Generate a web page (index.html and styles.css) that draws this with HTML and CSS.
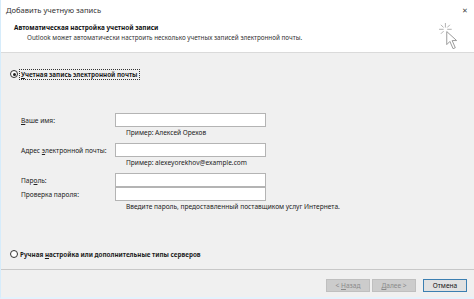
FILE: index.html
```html
<!DOCTYPE html>
<html lang="ru">
<head>
  <meta charset="UTF-8" />
  <title>Добавить учетную запись</title>
  <link rel="stylesheet" href="styles.css">
</head>
<body>
  <div class="window">
    <div class="titlebar">
      <span class="title">Добавить учетную запись</span>
      <span class="close">&#x2715;</span>
    </div>

    <div class="header">
      <div class="header-text">
        <div class="header-title">Автоматическая настройка учетной записи</div>
        <div class="header-sub">Outlook может автоматически настроить несколько учетных записей электронной почты.</div>
      </div>
      <svg class="wizard-icon" width="20" height="27" viewBox="0 0 22 30">
        <g stroke="#b0b0b0" stroke-width="1.1" fill="none">
          <line x1="7" y1="0" x2="7" y2="5"/>
          <line x1="0" y1="7" x2="5" y2="7"/>
          <line x1="9" y1="7" x2="14" y2="7"/>
          <line x1="2" y1="2" x2="5" y2="5"/>
          <line x1="12" y1="2" x2="9" y2="5"/>
          <line x1="2" y1="12" x2="5" y2="9"/>
        </g>
        <path d="M8.5 9.5 L8.5 24 L12 20.5 L15.5 28.5 L18 27.5 L14.5 19.5 L19.5 19.5 Z" fill="#fff" stroke="#9a9a9a" stroke-width="1.1"/>
      </svg>
    </div>

    <div class="content">
      <label class="radio-row first">
        <span class="radio checked"></span>
        <span class="radio-label focus"><u>У</u>четная запись электронной почты</span>
      </label>

      <div class="form">
        <div class="field">
          <span class="field-label"><u>В</u>аше имя:</span>
          <span class="input"></span>
        </div>
        <div class="hint">Пример: Алексей Орехов</div>

        <div class="field gap">
          <span class="field-label">Адрес <u>э</u>лектронной почты:</span>
          <span class="input"></span>
        </div>
        <div class="hint">Пример: alexeyorekhov@example.com</div>

        <div class="field gap">
          <span class="field-label">Пар<u>о</u>ль:</span>
          <span class="input"></span>
        </div>
        <div class="field">
          <span class="field-label">Проверка пароля:</span>
          <span class="input"></span>
        </div>
        <div class="hint">Введите пароль, предоставленный поставщиком услуг Интернета.</div>
      </div>

      <label class="radio-row second">
        <span class="radio"></span>
        <span class="radio-label">Ручная <u>н</u>астройка или дополнительные типы серверов</span>
      </label>
    </div>

    <div class="footer">
      <button class="btn" disabled>&lt; <u>Н</u>азад</button>
      <button class="btn" disabled><u>Д</u>алее &gt;</button>
      <button class="btn primary">Отмена</button>
    </div>
  </div>
</body>
</html>
```

FILE: styles.css
```css
* {
  box-sizing: border-box;
}

body {
  margin: 0;
  padding: 0;
  font-family: 'Noto Sans', 'Open Sans', sans-serif;
  font-size: 6.6px;
  color: #1e1e1e;
  background: #f0f0f0;
}

.window {
  width: 474px;
  height: 299px;
  display: flex;
  flex-direction: column;
  background: #f0f0f0;
  border-left: 1px solid #d6ecfb;
  border-bottom: 2px solid #e4f2fc;
}

.titlebar {
  height: 20px;
  background: #fff;
  display: flex;
  align-items: center;
  justify-content: space-between;
  padding: 0 6px 0 5px;
}

.title {
  font-size: 7.6px;
  color: #333;
}

.close {
  font-size: 7px;
  color: #444;
}

.header {
  height: 33px;
  background: #fff;
  border-bottom: 1px solid #dadada;
  display: flex;
  justify-content: space-between;
  align-items: flex-start;
  padding: 3px 15px 0 13px;
}

.header-title {
  font-weight: bold;
  font-size: 6.4px;
  color: #111;
  line-height: 10px;
}

.header-sub {
  padding-left: 13px;
  line-height: 10px;
  color: #333;
  font-size: 6.3px;
}

.wizard-icon {
  flex-shrink: 0;
}

.content {
  flex: 1;
  padding: 15px 0 0 9px;
}

.radio-row {
  display: flex;
  align-items: center;
  gap: 2px;
  font-weight: bold;
  font-size: 6.3px;
  height: 12px;
}

.radio {
  width: 8px;
  height: 8px;
  border: 1px solid #333;
  border-radius: 50%;
  background: #fff;
  position: relative;
}

.radio.checked::after {
  content: "";
  position: absolute;
  left: 1.5px;
  top: 1.5px;
  width: 3px;
  height: 3px;
  border-radius: 50%;
  background: #222;
}

.radio-label.focus {
  outline: 1px dotted #333;
  padding: 0 1px;
}

.form {
  margin-top: 33px;
  padding-left: 11px;
}

.field {
  display: flex;
  align-items: center;
  height: 14px;
}

.field.gap {
  margin-top: 4px;
}

.field-label {
  width: 94px;
  color: #222;
}

.input {
  width: 151px;
  height: 14px;
  background: #fff;
  border: 1px solid #b4b4b4;
}

.hint {
  padding-left: 105px;
  line-height: 12px;
  color: #222;
}

.radio-row.second {
  margin-top: 35px;
}

.footer {
  height: 28px;
  border-top: 1px solid #c8c8c8;
  display: flex;
  justify-content: flex-end;
  align-items: flex-start;
  gap: 2px;
  padding: 9px 7px 0 0;
}

.btn {
  font-family: inherit;
  font-size: 6.6px;
  width: 44px;
  height: 13px;
  padding: 0;
  border: 1px solid #bfbfbf;
  background: #cccccc;
  color: #8a8a8a;
}

.btn.primary {
  margin-left: 5px;
  background: #e1e1e1;
  border: 1px solid #3c7fb1;
  color: #111;
}
```
